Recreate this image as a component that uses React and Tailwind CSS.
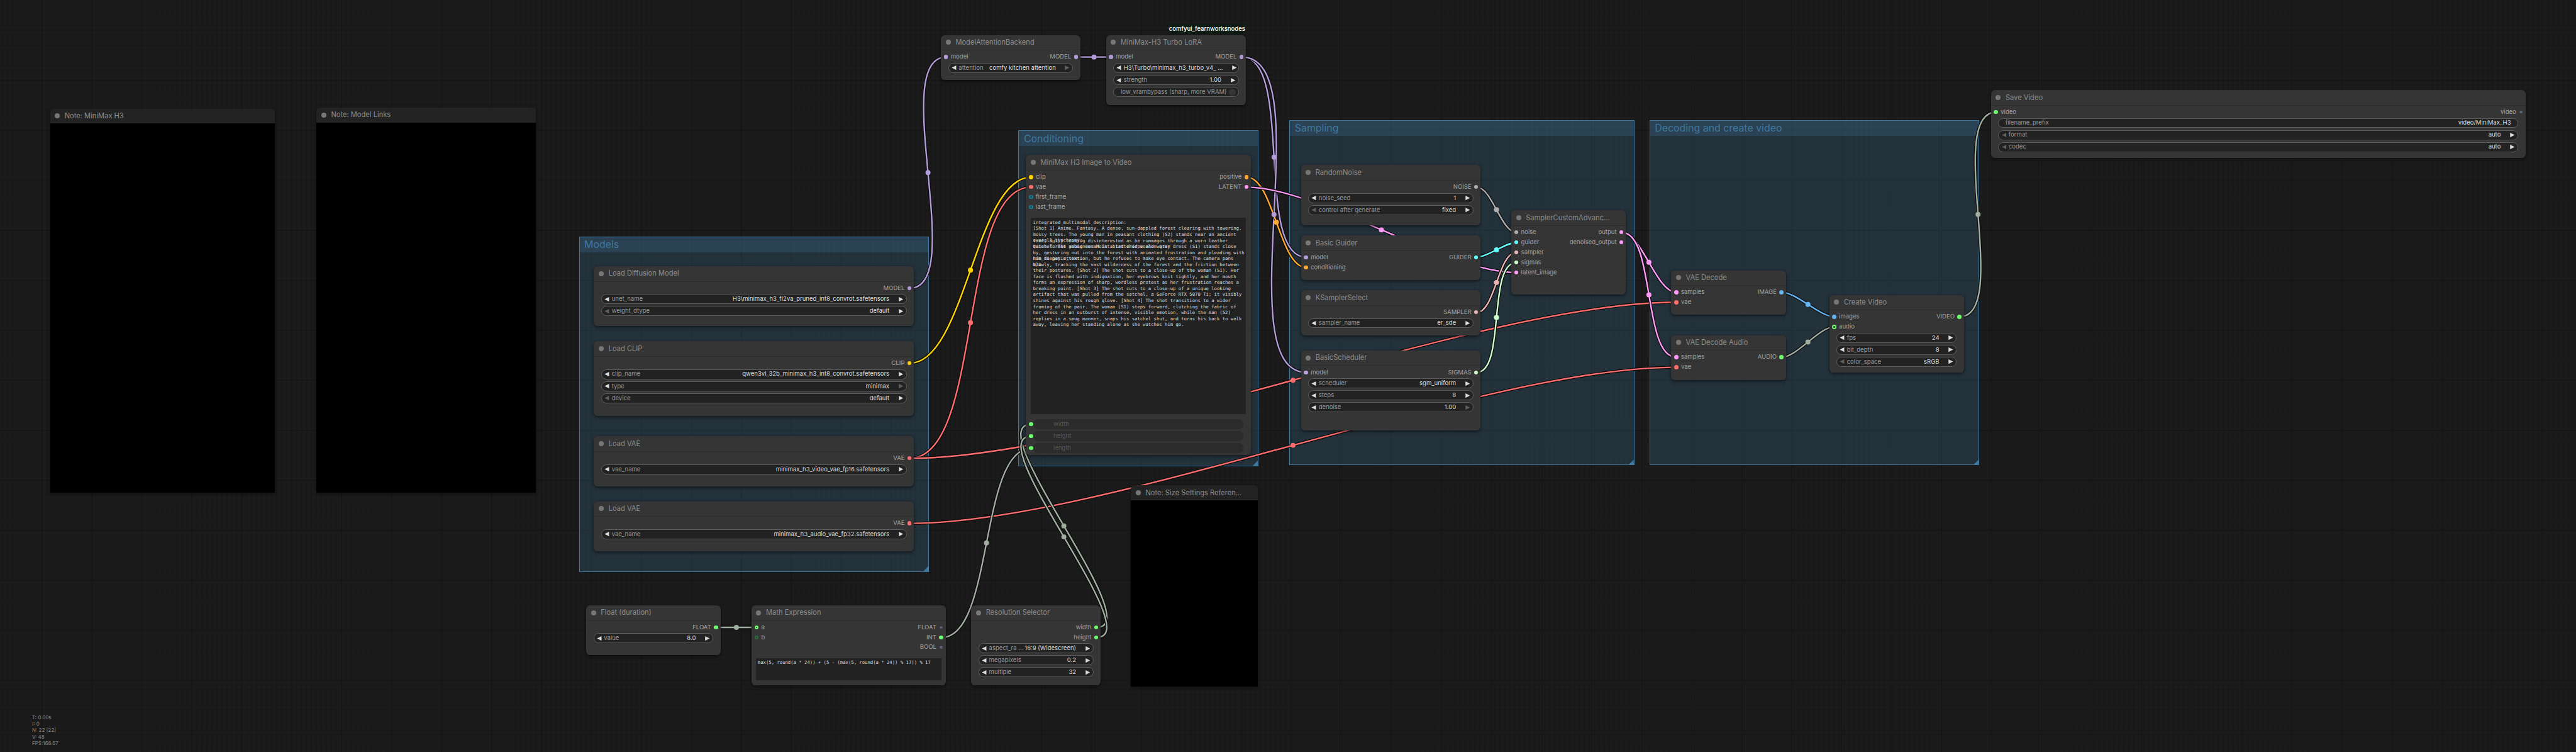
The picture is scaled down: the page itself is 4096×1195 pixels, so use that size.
// ComfyUI canvas: node and group places come from reference coordinates, scaled by K
const K = 0.795

const pos = (x, y, x2, y2) => ({
  left: x * K,
  top: y * K,
  width: (x2 - x) * K,
  height: (y2 - y) * K,
})

const SLOT = {
  model: 'bg-[#b39ddb]',
  clip: 'bg-[#ffd500]',
  vae: 'bg-[#ff6e6e]',
  cond: 'bg-[#ffa931]',
  latent: 'bg-[#ff9cf9]',
  noise: 'bg-[#b0b0b0]',
  guider: 'bg-[#66ffff]',
  sampler: 'bg-[#ecb4b4]',
  sigmas: 'bg-[#cdffcd]',
  image: 'bg-[#64b5f6]',
  green: 'bg-[#6eff6e]',
  off: 'bg-[#5f5f72] border border-[#2c2c34]',
  ring: 'bg-[#222] border-2 border-[#6eff6e]',
  imgDim: 'bg-[#0f3a44] border-2 border-[#1c7f8f]',
  greenDim: 'bg-[#1f3a24] border-2 border-[#2f6a3a]',
}

const C = {
  model: '#b39ddb',
  clip: '#ffd500',
  vae: '#ff6e6e',
  cond: '#ffa931',
  latent: '#ff9cf9',
  noise: '#b0b0b0',
  guider: '#66ffff',
  sampler: '#ecb4b4',
  sigmas: '#cdffcd',
  image: '#64b5f6',
  sage: '#a1aea0',
}

// [color, x1, y1, x2, y2] in reference pixels
const LINKS = [
  [C.model, 1819, 576, 1892, 114],
  [C.model, 2153, 114, 2222, 114],
  [C.model, 2483, 114, 2612, 514],
  [C.model, 2483, 114, 2612, 744],
  [C.clip, 1819, 726, 2062, 354],
  [C.vae, 1819, 916, 2062, 374],
  [C.vae, 1819, 916, 3352, 604],
  [C.vae, 1819, 1046, 3352, 734],
  [C.cond, 2492.6, 354, 2612, 534.5],
  [C.latent, 2492.6, 374, 3032, 544.7],
  [C.noise, 2953, 374, 3032, 464.5],
  [C.guider, 2953, 514, 3032, 484.5],
  [C.sampler, 2953, 624.6, 3032, 504.5],
  [C.sigmas, 2953, 744, 3032, 525],
  [C.latent, 3242.6, 464.5, 3352, 584],
  [C.latent, 3242.6, 464.5, 3352, 714],
  [C.image, 3562.6, 584, 3668, 633],
  [C.sage, 3562.6, 714, 3668, 653.3],
  [C.sage, 3919, 633, 3992, 224],
  [C.sage, 1432.7, 1254, 1512, 1254],
  [C.sage, 1883, 1274, 2062, 896],
  [C.sage, 2192.5, 1254, 2062, 848],
  [C.sage, 2192.5, 1274, 2062, 872],
]

function Links() {
  const parts = LINKS.map(([color, x1, y1, x2, y2]) => {
    const off = Math.hypot(x2 - x1, y2 - y1) * 0.25
    const d = `M${x1} ${y1}C${x1 + off} ${y1} ${x2 - off} ${y2} ${x2} ${y2}`
    // the offsets cancel at t = 0.5, so the marker sits halfway between the slots
    return { color, d, mx: (x1 + x2) / 2, my: (y1 + y2) / 2 }
  })
  return (
    <svg className="absolute inset-0 w-[4096px] h-[1195px]" viewBox="0 0 5151 1503">
      <g fill="none" strokeLinecap="round">
        {parts.map((p, i) => (
          <g key={i}>
            <path d={p.d} stroke="#0b0b0b" strokeWidth="6" />
            <path d={p.d} stroke={p.color} strokeWidth="3" />
          </g>
        ))}
      </g>
      {parts.map((p, i) => (
        <circle key={i} cx={p.mx} cy={p.my} r="5" fill={p.color} />
      ))}
    </svg>
  )
}

function Group({ title, box }) {
  return (
    <div
      className="absolute border border-[#3f789e] bg-[#3f789e]/25 flex flex-col"
      style={pos(...box)}
    >
      <div className="h-[24px] shrink-0 bg-[#3f789e]/25 flex items-center pl-[7.5px] text-[15.9px] text-[#3f789e] whitespace-nowrap">
        {title}
      </div>
      <div className="absolute right-0 bottom-0 w-[8px] h-[8px] bg-[#3f789e] [clip-path:polygon(100%_0,100%_100%,0_100%)]" />
    </div>
  )
}

function Arrow({ dir, dim }) {
  return (
    <svg className="w-[7.7px] h-[7.2px] shrink-0" viewBox="0 0 10 10">
      <polygon
        points={dir === 'l' ? '10,0 0,5 10,10' : '0,0 10,5 0,10'}
        fill={dim ? '#5f5f5f' : '#dddddd'}
      />
    </svg>
  )
}

function Widget({ label, value, dimL, dimR }) {
  return (
    <div className="flex items-center h-[15.9px] rounded-full border border-[#5c5c5c] bg-[#222] px-[4.4px] text-[9.54px] whitespace-nowrap">
      <Arrow dir="l" dim={dimL} />
      {label && <span className="ml-[3.6px] text-[#999]">{label}</span>}
      <span className={`text-[#ddd] mr-[14.6px] ${label ? 'ml-auto' : 'ml-[3.6px] flex-1'}`}>
        {value}
      </span>
      <Arrow dir="r" dim={dimR} />
    </div>
  )
}

function TextWidget({ label, value }) {
  return (
    <div className="flex items-center justify-between h-[15.9px] rounded-full border border-[#5c5c5c] bg-[#222] px-[10.5px] text-[9.54px] whitespace-nowrap">
      <span className="text-[#999]">{label}</span>
      <span className="text-[#ddd]">{value}</span>
    </div>
  )
}

function ToggleWidget() {
  return (
    <div className="flex items-center h-[15.9px] rounded-full border border-[#5c5c5c] bg-[#222] pl-[11px] pr-[3.5px] text-[9.54px] whitespace-nowrap">
      <span className="text-[#999]">low_vram</span>
      <span className="text-[#999]">bypass (sharp, more VRAM)</span>
      <span className="ml-auto w-[11px] h-[11px] rounded-full bg-[#353535]" />
    </div>
  )
}

function Dot({ kind }) {
  return <span className={`w-[6.4px] h-[6.4px] shrink-0 rounded-full ${SLOT[kind]}`} />
}

function SlotRow({ left, right }) {
  return (
    <div className="flex items-center h-[15.9px] pl-[4.8px] pr-[4px] text-[9.54px] text-[#a3a3a3] whitespace-nowrap">
      {left && (
        <span className="flex items-center gap-[4.4px]">
          <Dot kind={left[1]} />
          {left[0]}
        </span>
      )}
      {right && (
        <span className="flex items-center gap-[4.4px] ml-auto">
          {right[0]}
          <Dot kind={right[1]} />
        </span>
      )}
    </div>
  )
}

function DimWidget({ label }) {
  return (
    <div className="flex items-center gap-[0.8px] pl-[4.8px] pr-[11.9px] h-[15.9px]">
      <Dot kind="green" />
      <div className="flex-1 h-full rounded-full bg-[#2b2b2b] pl-[31.8px] flex items-center text-[9.54px] text-[#595959]">
        {label}
      </div>
    </div>
  )
}

function Node({ title, box, rows = [], widgets, children }) {
  return (
    <div
      className="absolute rounded-[6.4px] bg-[#353535] shadow-[0_2px_5px_rgba(0,0,0,0.55)] flex flex-col"
      style={pos(...box)}
    >
      <div className="h-[24.6px] shrink-0 flex items-center pl-[7.6px] gap-[7.6px] border-b border-[#2d2d2d] text-[11.13px] text-[#8c8c8c] whitespace-nowrap">
        <span className="w-[8px] h-[8px] rounded-full bg-[#777]" />
        {title}
      </div>
      <div className="pt-[2.4px]">
        {rows.map((r, i) => (
          <SlotRow key={i} left={r[0]} right={r[1]} />
        ))}
      </div>
      {widgets && <div className="flex flex-col gap-[3.18px] mt-[1.6px] px-[11.5px]">{widgets}</div>}
      {children}
    </div>
  )
}

function Note({ title, box }) {
  return (
    <div className="absolute flex flex-col shadow-[0_2px_5px_rgba(0,0,0,0.4)]" style={pos(...box)}>
      <div className="h-[23.6px] shrink-0 rounded-t-[6.4px] bg-[#232323] flex items-center pl-[7.6px] gap-[7.6px] text-[11.13px] text-[#8c8c8c] whitespace-nowrap">
        <span className="w-[8px] h-[8px] rounded-full bg-[#777]" />
        {title}
      </div>
      <div className="flex-1 bg-black" />
    </div>
  )
}

const PROMPT = [
  'integrated_multimodal_description:',
  '[Shot 1] Anime. Fantasy. A dense, sun-dappled forest clearing with towering,',
  'mossy trees. The young man in peasant clothing (S2) stands near an ancient',
  'tree, dully looking disinterested as he rummages through a worn leather',
  'satchel. The young woman in a tattered woolen gray dress (S1) stands close',
  'by, gesturing out into the forest with animated frustration and pleading with',
  'him to pay attention, but he refuses to make eye contact. The camera pans',
  'slowly, tracking the vast wilderness of the forest and the friction between',
  'their postures. [Shot 2] The shot cuts to a close-up of the woman (S1). Her',
  'face is flushed with indignation, her eyebrows knit tightly, and her mouth',
  'forms an expression of sharp, wordless protest as her frustration reaches a',
  'breaking point. [Shot 3] The shot cuts to a close-up of a unique looking',
  'artifact that was pulled from the satchel, a GeForce RTX 5070 Ti; it visibly',
  'shines against his rough glove. [Shot 4] The shot transitions to a wider',
  'framing of the pair. The woman (S1) steps forward, clutching the fabric of',
  'her dress in an outburst of intense, visible emotion, while the man (S2)',
  'replies in a smug manner, snaps his satchel shut, and turns his back to walk',
  'away, leaving her standing alone as she watches him go.',
]

function PromptBox() {
  return (
    <div className="relative mt-[9.5px] mx-[8px] h-[311.6px] bg-[#222] px-[3.2px] pt-[2.4px] font-['DejaVu_Sans_Mono',monospace] text-[7.25px] leading-[9.54px] text-[#ddd] whitespace-pre">
      {PROMPT.map((line, i) => (
        <div key={i}>{line}</div>
      ))}
      {/* second text layer drawn on top of the first in the picture */}
      <div className="absolute left-[3.2px] top-[31px]">overall_synchrony:</div>
      <div className="absolute left-[3.2px] top-[40.56px]">Quiet forest ambience. Moist bird chirps and water</div>
      <div className="absolute left-[3.2px] top-[59.64px]">non_diegetic_text:</div>
      <div className="absolute left-[3.2px] top-[69.2px]">N/A</div>
    </div>
  )
}

export default function App() {
  return (
    <div className="relative w-[4096px] h-[1195px] overflow-hidden font-['Inter',sans-serif] bg-[#1b1b1b] bg-[linear-gradient(#141414_1px,transparent_1px),linear-gradient(90deg,#141414_1px,transparent_1px),linear-gradient(#171717_1px,transparent_1px),linear-gradient(90deg,#171717_1px,transparent_1px)] bg-[size:79.5px_79.5px,79.5px_79.5px,7.95px_7.95px,7.95px_7.95px] bg-[position:0_47.7px,66px_0,0_0,2.8px_0]">
      <Group title="Models" box={[1158, 472.5, 1858, 1143]} />
      <Group title="Conditioning" box={[2037, 261, 2517, 932]} />
      <Group title="Sampling" box={[2579, 240, 3269, 930]} />
      <Group title="Decoding and create video" box={[3299, 240, 3959, 930]} />

      <Links />

      <Note title="Note: MiniMax H3" box={[100, 217, 550, 985]} />
      <Note title="Note: Model Links" box={[633, 215, 1072, 985]} />
      <Note title="Note: Size Settings Referen..." box={[2262, 970, 2516, 1372]} />

      <Node
        title="Load Diffusion Model"
        box={[1188, 532, 1828, 652]}
        rows={[[null, ['MODEL', 'model']]]}
        widgets={
          <>
            <Widget label="unet_name" value="H3\minimax_h3_fl2va_pruned_int8_convrot.safetensors" />
            <Widget label="weight_dtype" value="default" dimL />
          </>
        }
      />
      <Node
        title="Load CLIP"
        box={[1188, 682, 1828, 832]}
        rows={[[null, ['CLIP', 'clip']]]}
        widgets={
          <>
            <Widget label="clip_name" value="qwen3vl_32b_minimax_h3_int8_convrot.safetensors" />
            <Widget label="type" value="minimax" dimR />
            <Widget label="device" value="default" dimL />
          </>
        }
      />
      <Node
        title="Load VAE"
        box={[1188, 872, 1828, 972]}
        rows={[[null, ['VAE', 'vae']]]}
        widgets={<Widget label="vae_name" value="minimax_h3_video_vae_fp16.safetensors" />}
      />
      <Node
        title="Load VAE"
        box={[1188, 1002, 1828, 1102]}
        rows={[[null, ['VAE', 'vae']]]}
        widgets={<Widget label="vae_name" value="minimax_h3_audio_vae_fp32.safetensors" />}
      />

      <Node
        title="ModelAttentionBackend"
        box={[1882, 70, 2161, 160]}
        rows={[[['model', 'model'], ['MODEL', 'model']]]}
        widgets={<Widget label="attention" value="comfy kitchen attention" dimR />}
      />
      <div className="absolute left-[1859.5px] top-[38.2px] w-[119.6px] h-[15.9px] rounded-[3.2px] bg-[#0f1c14] flex items-center justify-center text-[9.54px] font-medium text-white whitespace-nowrap">
        comfyui_fearnworksnodes
      </div>
      <Node
        title="MiniMax-H3 Turbo LoRA"
        box={[2212, 70, 2492, 210]}
        rows={[[['model', 'model'], ['MODEL', 'model']]]}
        widgets={
          <>
            <Widget value="H3\Turbo\minimax_h3_turbo_v4_ ..." />
            <Widget label="strength" value="1.00" />
            <ToggleWidget />
          </>
        }
      />

      <Node
        title="MiniMax H3 Image to Video"
        box={[2052, 310, 2502, 910]}
        rows={[
          [['clip', 'clip'], ['positive', 'cond']],
          [['vae', 'vae'], ['LATENT', 'latent']],
          [['first_frame', 'imgDim'], null],
          [['last_frame', 'imgDim'], null],
        ]}
      >
        <PromptBox />
        <div className="flex flex-col gap-[3.18px] mt-[8px]">
          <DimWidget label="width" />
          <DimWidget label="height" />
          <DimWidget label="length" />
        </div>
      </Node>

      <Node
        title="RandomNoise"
        box={[2602, 330, 2961.5, 450]}
        rows={[[null, ['NOISE', 'noise']]]}
        widgets={
          <>
            <Widget label="noise_seed" value="1" />
            <Widget label="control after generate" value="fixed" dimL />
          </>
        }
      />
      <Node
        title="Basic Guider"
        box={[2602, 470.5, 2961.5, 560]}
        rows={[
          [['model', 'model'], ['GUIDER', 'guider']],
          [['conditioning', 'cond'], null],
        ]}
      />
      <Node
        title="KSamplerSelect"
        box={[2602, 580, 2961.5, 670]}
        rows={[[null, ['SAMPLER', 'sampler']]]}
        widgets={<Widget label="sampler_name" value="er_sde" />}
      />
      <Node
        title="BasicScheduler"
        box={[2602, 700.5, 2961.5, 860]}
        rows={[[['model', 'model'], ['SIGMAS', 'sigmas']]]}
        widgets={
          <>
            <Widget label="scheduler" value="sgm_uniform" />
            <Widget label="steps" value="8" />
            <Widget label="denoise" value="1.00" dimR />
          </>
        }
      />
      <Node
        title="SamplerCustomAdvanc..."
        box={[3022.7, 420.6, 3252, 589]}
        rows={[
          [['noise', 'noise'], ['output', 'latent']],
          [['guider', 'guider'], ['denoised_output', 'latent']],
          [['sampler', 'sampler'], null],
          [['sigmas', 'sigmas'], null],
          [['latent_image', 'latent'], null],
        ]}
      />

      <Node
        title="VAE Decode"
        box={[3342.6, 540.4, 3572, 629.4]}
        rows={[
          [['samples', 'latent'], ['IMAGE', 'image']],
          [['vae', 'vae'], null],
        ]}
      />
      <Node
        title="VAE Decode Audio"
        box={[3342.6, 670, 3572, 760]}
        rows={[
          [['samples', 'latent'], ['AUDIO', 'green']],
          [['vae', 'vae'], null],
        ]}
      />
      <Node
        title="Create Video"
        box={[3658.5, 589.5, 3928, 745]}
        rows={[
          [['images', 'image'], ['VIDEO', 'green']],
          [['audio', 'ring'], null],
        ]}
        widgets={
          <>
            <Widget label="fps" value="24" />
            <Widget label="bit_depth" value="8" />
            <Widget label="color_space" value="sRGB" dimL />
          </>
        }
      />
      <Node
        title="Save Video"
        box={[3982, 180, 5051, 315.7]}
        rows={[[['video', 'green'], ['video', 'off']]]}
        widgets={
          <>
            <TextWidget label="filename_prefix" value="video/MiniMax_H3" />
            <Widget label="format" value="auto" dimL />
            <Widget label="codec" value="auto" dimL />
          </>
        }
      />

      <Node
        title="Float (duration)"
        box={[1172.4, 1210, 1441, 1310]}
        rows={[[null, ['FLOAT', 'green']]]}
        widgets={<Widget label="value" value="8.0" />}
      />
      <Node
        title="Math Expression"
        box={[1503, 1210, 1891.5, 1370]}
        rows={[
          [['a', 'ring'], ['FLOAT', 'off']],
          [['b', 'greenDim'], ['INT', 'green']],
          [null, ['BOOL', 'off']],
        ]}
      >
        <div className="mt-[9px] mx-[7.2px] h-[35px] bg-[#222] px-[2.8px] pt-[2.4px] font-['DejaVu_Sans_Mono',monospace] text-[7.25px] leading-[9.54px] text-[#ddd] whitespace-pre">
          max(5, round(a * 24)) + (5 - (max(5, round(a * 24)) % 17)) % 17
        </div>
      </Node>
      <Node
        title="Resolution Selector"
        box={[1942.7, 1210, 2201.6, 1370]}
        rows={[
          [null, ['width', 'green']],
          [null, ['height', 'green']],
        ]}
        widgets={
          <>
            <Widget label="aspect_ra ..." value="16:9 (Widescreen)" />
            <Widget label="megapixels" value="0.2" />
            <Widget label="multiple" value="32" />
          </>
        }
      />

      <div className="absolute left-[51px] top-[1134.5px] text-[8px] leading-[10.35px] text-[#888]">
        <div>T: 0.00s</div>
        <div>I: 0</div>
        <div>N: 22 [22]</div>
        <div>V: 48</div>
        <div>FPS:166.67</div>
      </div>
    </div>
  )
}
